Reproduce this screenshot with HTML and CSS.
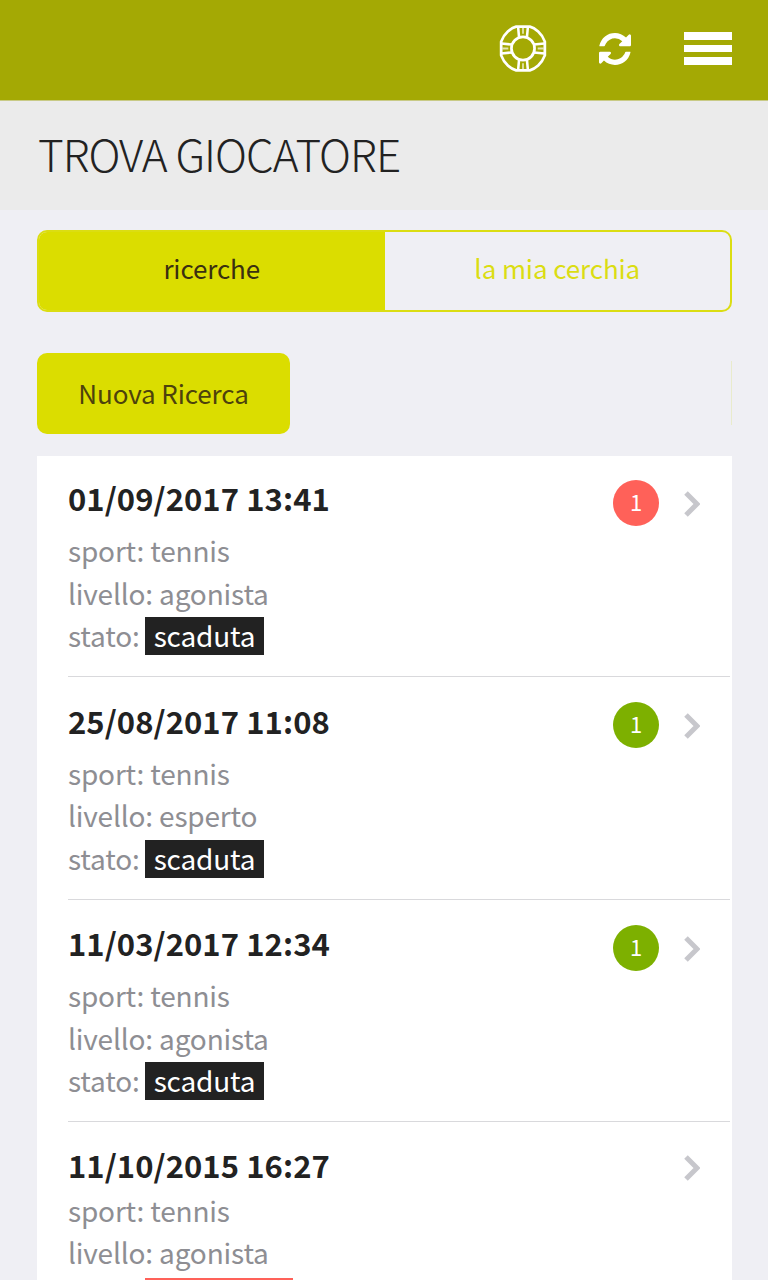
FILE: index.html
```
<!DOCTYPE html>
<html lang="it">
<head>
    <meta charset="UTF-8">
    <title>Trova Giocatore</title>
    <link rel="stylesheet" href="styles.css">
</head>
<body>
    <header class="navbar">
        <svg class="icon-help" viewBox="0 0 48 48" fill="none" stroke="#fff">
            <path stroke-width="2.800" d="M17 1.700h14q4 1 8.500 5t6.800 10.300v14q-2.300 6.300-6.800 10.300T31 46.300H17q-4-1-8.500-5T1.700 31V17Q4 10.700 8.500 6.700T17 1.700z"/>
            <circle cx="24" cy="24" r="11.800" stroke-width="2.800"/>
            <path stroke-width="2.600" d="M19 2l1 11M29 2l-1 11M19 46l1-11M29 46l-1-11M2 19l11 1M2 29l11-1M46 19l-11 1M46 29l-11-1"/>
            <path stroke-width="1.800" stroke-opacity="0.700" d="M24 3v6M24 39v6M3 24h6M39 24h6"/>
        </svg>
        <svg class="icon-refresh" viewBox="0 0 1536 1536" fill="#fff">
            <path d="M1511 928q0 5-1 7-64 268-268 434.500T764 1536q-146 0-282.500-55T238 1324l-129 129q-19 19-45 19t-45-19-19-45V960q0-26 19-45t45-19h448q26 0 45 19t19 45-19 45l-137 137q71 66 161 102t187 36q134 0 250-65t186-179q11-17 53-117 8-23 30-23h192q13 0 22.500 9.500t9.500 22.500zM1536 128v448q0 26-19 45t-45 19h-448q-26 0-45-19t-19-45 19-45l138-138Q969 256 768 256q-134 0-250 65T332 500q-11 17-53 117-8 23-30 23H50q-13 0-22.500-9.500T18 608v-7q65-268 270-434.500T768 0q146 0 284 55.500T1297 212l130-129q19-19 45-19t45 19 19 45z"/>
        </svg>
        <div class="icon-menu"><i></i><i></i><i></i></div>
    </header>

    <div class="page-title">
        <h1>TROVA GIOCATORE</h1>
    </div>

    <main class="content">
        <div class="tabs">
            <a class="tab active">ricerche</a>
            <a class="tab">la mia cerchia</a>
        </div>

        <div class="actions">
            <a class="button">Nuova Ricerca</a>
        </div>

        <ul class="list">
            <li class="item">
                <div class="item-inner">
                    <div class="item-title">01/09/2017 13:41</div>
                    <div class="item-text">sport: tennis</div>
                    <div class="item-text">livello: agonista</div>
                    <div class="item-text">stato: <span class="label">scaduta</span></div>
                </div>
                <span class="badge red">1</span>
                <svg class="chevron" viewBox="0 0 16 26"><path d="M2 2l11 11L2 24"/></svg>
            </li>
            <li class="item">
                <div class="item-inner">
                    <div class="item-title">25/08/2017 11:08</div>
                    <div class="item-text">sport: tennis</div>
                    <div class="item-text">livello: esperto</div>
                    <div class="item-text">stato: <span class="label">scaduta</span></div>
                </div>
                <span class="badge">1</span>
                <svg class="chevron" viewBox="0 0 16 26"><path d="M2 2l11 11L2 24"/></svg>
            </li>
            <li class="item">
                <div class="item-inner">
                    <div class="item-title">11/03/2017 12:34</div>
                    <div class="item-text">sport: tennis</div>
                    <div class="item-text">livello: agonista</div>
                    <div class="item-text">stato: <span class="label">scaduta</span></div>
                </div>
                <span class="badge">1</span>
                <svg class="chevron" viewBox="0 0 16 26"><path d="M2 2l11 11L2 24"/></svg>
            </li>
            <li class="item no-badge">
                <div class="item-inner">
                    <div class="item-title">11/10/2015 16:27</div>
                    <div class="item-text">sport: tennis</div>
                    <div class="item-text">livello: agonista</div>
                    <div class="label red"></div>
                </div>
                <svg class="chevron" viewBox="0 0 16 26"><path d="M2 2l11 11L2 24"/></svg>
            </li>
        </ul>
    </main>
</body>
</html>
```
FILE: styles.css
```
* {
    box-sizing: border-box;
}

body {
    margin: 0;
    height: 1280px;
    overflow: hidden;
    background: #efeff4;
    color: #222;
    font-family: "Noto Sans CJK SC", "Noto Sans", sans-serif;
}

.navbar {
    display: flex;
    align-items: center;
    justify-content: flex-end;
    height: 101px;
    padding: 0 36px 3px 0;
    background: #a4a904;
    border-bottom: 1px solid #c8ca86;
}

.icon-help {
    width: 48px;
    height: 47px;
    margin-right: 52px;
}

.icon-refresh {
    width: 32px;
    height: 32px;
    margin-right: 53px;
}

.icon-menu {
    display: flex;
    flex-direction: column;
    gap: 5px;
    width: 48px;
}

.icon-menu i {
    height: 7.500px;
    background: #fff;
}

.page-title {
    height: 109px;
    padding: 0 38px;
    background: #ebebeb;
}

h1 {
    margin: 0;
    font-size: 44px;
    font-weight: 200;
    letter-spacing: -0.950px;
    line-height: 105px;
}

.content {
    padding: 20.400px 36px 0 37px;
}

.tabs {
    display: flex;
    height: 82px;
    border: 2px solid #dbdd12;
    border-radius: 10px;
    overflow: hidden;
}

.tab {
    flex: 1;
    color: #dbdd12;
    font-size: 26px;
    letter-spacing: -0.100px;
    line-height: 71px;
    text-align: center;
}

.tab.active {
    background: #dbdd00;
    color: #3a3010;
}

.actions {
    display: flex;
    justify-content: space-between;
    height: 81px;
    margin: 40.600px 0 22px;
}

.actions::after {
    content: "";
    align-self: center;
    width: 1px;
    height: 64px;
    background: #e9ebcc;
}

.button {
    width: 253px;
    border-radius: 10px;
    background: #dbdd00;
    color: #4d420c;
    font-size: 26px;
    letter-spacing: -0.100px;
    line-height: 80px;
    text-align: center;
}

.list {
    height: 824px;
    margin: 0;
    padding: 0;
    overflow: hidden;
    list-style: none;
    background: #fff;
}

.item {
    display: flex;
    height: 222.300px;
    padding-right: 32px;
    position: relative;
}

.item::after {
    content: "";
    position: absolute;
    left: 31px;
    right: 2px;
    bottom: 1px;
    height: 1px;
    background: #d9d9dc;
}

.item-inner {
    flex: 1;
    padding: 22.500px 0 0 31px;
}

.item-title {
    height: 51px;
    font-size: 31px;
    font-weight: 700;
    letter-spacing: 0.080px;
    line-height: 40px;
}

.no-badge .item-title {
    height: 43.500px;
}

.item-text {
    height: 42.500px;
    color: #8e8e93;
    font-size: 28px;
    letter-spacing: -0.170px;
    line-height: 42.500px;
    white-space: pre;
}

.label {
    display: inline-block;
    height: 38px;
    margin-left: -1px;
    padding: 0 9px;
    background: #222;
    color: #fff;
    line-height: 37px;
}

.label.red {
    width: 148px;
    margin: 4px 0 0 77px;
    background: #ff6159;
}

.badge {
    width: 46px;
    height: 46px;
    margin: 24px 25px 0 0;
    border-radius: 50%;
    background: #7db000;
    color: #fff;
    font-size: 22px;
    line-height: 43px;
    text-align: center;
}

.badge.red {
    background: #ff6159;
}

.chevron {
    width: 16px;
    height: 26px;
    margin-top: 35px;
    fill: none;
    stroke: #c7c7cc;
    stroke-width: 5;
}

.no-badge .chevron {
    margin-top: 32px;
}
```
